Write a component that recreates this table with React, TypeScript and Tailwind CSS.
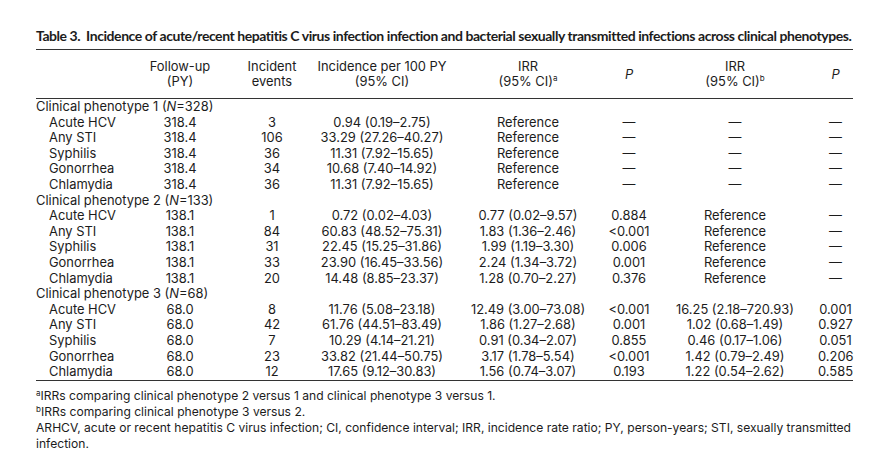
type Row = { label: string; n?: string; cells?: string[] };

const data: Row[] = [
  { label: "Clinical phenotype 1", n: "328" },
  { label: "Acute HCV", cells: ["318.4", "3", "0.94 (0.19–2.75)", "Reference", "—", "—", "—"] },
  { label: "Any STI", cells: ["318.4", "106", "33.29 (27.26–40.27)", "Reference", "—", "—", "—"] },
  { label: "Syphilis", cells: ["318.4", "36", "11.31 (7.92–15.65)", "Reference", "—", "—", "—"] },
  { label: "Gonorrhea", cells: ["318.4", "34", "10.68 (7.40–14.92)", "Reference", "—", "—", "—"] },
  { label: "Chlamydia", cells: ["318.4", "36", "11.31 (7.92–15.65)", "Reference", "—", "—", "—"] },
  { label: "Clinical phenotype 2", n: "133" },
  { label: "Acute HCV", cells: ["138.1", "1", "0.72 (0.02–4.03)", "0.77 (0.02–9.57)", "0.884", "Reference", "—"] },
  { label: "Any STI", cells: ["138.1", "84", "60.83 (48.52–75.31)", "1.83 (1.36–2.46)", "<0.001", "Reference", "—"] },
  { label: "Syphilis", cells: ["138.1", "31", "22.45 (15.25–31.86)", "1.99 (1.19–3.30)", "0.006", "Reference", "—"] },
  { label: "Gonorrhea", cells: ["138.1", "33", "23.90 (16.45–33.56)", "2.24 (1.34–3.72)", "0.001", "Reference", "—"] },
  { label: "Chlamydia", cells: ["138.1", "20", "14.48 (8.85–23.37)", "1.28 (0.70–2.27)", "0.376", "Reference", "—"] },
  { label: "Clinical phenotype 3", n: "68" },
  { label: "Acute HCV", cells: ["68.0", "8", "11.76 (5.08–23.18)", "12.49 (3.00–73.08)", "<0.001", "16.25 (2.18–720.93)", "0.001"] },
  { label: "Any STI", cells: ["68.0", "42", "61.76 (44.51–83.49)", "1.86 (1.27–2.68)", "0.001", "1.02 (0.68–1.49)", "0.927"] },
  { label: "Syphilis", cells: ["68.0", "7", "10.29 (4.14–21.21)", "0.91 (0.34–2.07)", "0.855", "0.46 (0.17–1.06)", "0.051"] },
  { label: "Gonorrhea", cells: ["68.0", "23", "33.82 (21.44–50.75)", "3.17 (1.78–5.54)", "<0.001", "1.42 (0.79–2.49)", "0.206"] },
  { label: "Chlamydia", cells: ["68.0", "12", "17.65 (9.12–30.83)", "1.56 (0.74–3.07)", "0.193", "1.22 (0.54–2.62)", "0.585"] },
];

const grid = "grid grid-cols-[94px_100px_84px_136px_156px_46px_166px_35px]";

export default function App() {
  return (
    <div className="min-h-screen w-full bg-white text-[#1c1c1c] pl-[36px] pt-[28px] font-['Inter','Open_Sans',sans-serif]">
      <div className="w-[817px]">
        <h1 className="font-['Lato',sans-serif] text-[14px] leading-4 font-bold whitespace-nowrap tracking-[-0.44px]">
          Table 3.&nbsp; Incidence of acute/recent hepatitis C virus infection infection and bacterial sexually transmitted infections across clinical phenotypes.
        </h1>
        <div className="mt-[5px] border-t-[1.5px] border-[#333]" />
        <div className={`${grid} h-[48px] items-center text-[12.9px] leading-[15px] text-center`}>
          <div />
          <div>Follow-up<br />(PY)</div>
          <div>Incident<br />events</div>
          <div>Incidence per 100 PY<br />(95% CI)</div>
          <div>IRR<br />(95% CI)<span className="relative -top-[5px] text-[8px] leading-none">a</span></div>
          <div className="italic">P</div>
          <div>IRR<br />(95% CI)<span className="relative -top-[5px] text-[8px] leading-none">b</span></div>
          <div className="italic">P</div>
        </div>
        <div className="border-t-[1.5px] border-[#333]" />
        <div className="text-[12.9px] leading-[15.6px]">
          {data.map((r, i) =>
            r.cells ? (
              <div key={i} className={`${grid} text-center whitespace-nowrap`}>
                <div className="text-left pl-[13px]">{r.label}</div>
                {r.cells.map((c, j) => (
                  <div key={j}>{c}</div>
                ))}
              </div>
            ) : (
              <div key={i} className="whitespace-nowrap">
                {r.label} (<span className="italic">N</span>={r.n})
              </div>
            )
          )}
        </div>
        <div className="border-t-[1.5px] border-[#333]" />
        <div className="mt-[7px] text-[12.1px] leading-4">
          <p><span className="relative -top-[4px] text-[8px] leading-none">a</span>IRRs comparing clinical phenotype 2 versus 1 and clinical phenotype 3 versus 1.</p>
          <p><span className="relative -top-[4px] text-[8px] leading-none">b</span>IRRs comparing clinical phenotype 3 versus 2.</p>
          <p>
            ARHCV, acute or recent hepatitis C virus infection; CI, confidence interval; IRR, incidence rate ratio; PY, person-years; STI, sexually transmitted infection.
          </p>
        </div>
      </div>
    </div>
  );
}
